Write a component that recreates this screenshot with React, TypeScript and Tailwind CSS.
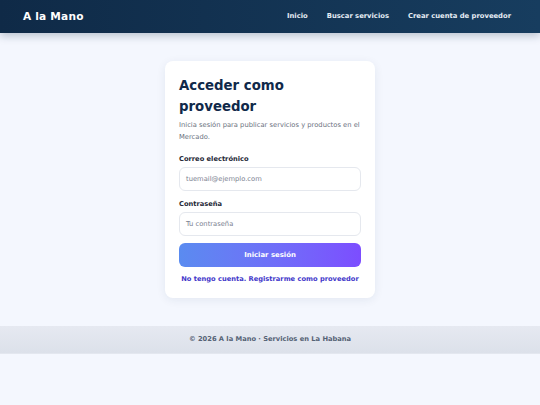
import React from 'react';

const font = { fontFamily: '"DejaVu Sans", Verdana, sans-serif' };

export default function App() {
  return (
    <div className="min-h-[405px] bg-[#f4f7fe] flex flex-col" style={font}>
      {/* Header */}
      <header className="h-[33px] flex items-center justify-between px-[23px] bg-gradient-to-r from-[#0f2a47] to-[#173d5f] shadow-[0_3px_8px_rgba(15,42,71,0.25)] relative z-10">
        <span className="text-white font-bold text-[10.6px] tracking-[0.2px]">A la Mano</span>
        <nav className="flex items-center gap-[19px] text-[6.8px] font-bold text-[#e6edf5] pr-[6px]">
          <a>Inicio</a>
          <a>Buscar servicios</a>
          <a>Crear cuenta de proveedor</a>
        </nav>
      </header>

      {/* Main */}
      <main className="flex justify-center py-[28px]">
        <div className="w-[210px] bg-white rounded-[8px] shadow-[0_2px_10px_rgba(30,50,90,0.08)] px-[14px] pt-[14px] pb-[13.5px]">
          <h1 className="text-[13.3px] leading-[21px] font-bold text-[#10294a]">
            Acceder como proveedor
          </h1>
          <p className="mt-[3px] text-[6.75px] leading-[11.5px] text-[#6b7280]">
            Inicia sesión para publicar servicios y productos en el Mercado.
          </p>

          <label className="block mt-[10.5px] text-[6.7px] leading-[11px] font-bold text-[#1f2937]">
            Correo electrónico
          </label>
          <div className="mt-[2.5px] h-[24px] rounded-[6px] border border-[#e5e8ee] flex items-center px-[6px] text-[6.75px] text-[#7b8190]">
            tuemail@ejemplo.com
          </div>

          <label className="block mt-[7.5px] text-[6.7px] leading-[11px] font-bold text-[#1f2937]">
            Contraseña
          </label>
          <div className="mt-[2.5px] h-[24px] rounded-[6px] border border-[#e5e8ee] flex items-center px-[6px] text-[6.75px] text-[#7b8190]">
            Tu contraseña
          </div>

          <button className="mt-[7px] w-full h-[24px] rounded-[6px] bg-gradient-to-r from-[#5a8bf0] to-[#7c4dff] text-white text-[6.9px] font-bold flex items-center justify-center">
            Iniciar sesión
          </button>

          <p className="mt-[6.5px] text-center text-[6.7px] leading-[11px] font-bold text-[#4338ca]">
            No tengo cuenta. Registrarme como proveedor
          </p>
        </div>
      </main>

      {/* Footer */}
      <footer className="h-[28px] flex items-center justify-center bg-gradient-to-b from-[#e6e9f1] to-[#dce1ea] border-b border-[#e3e7ef] text-[6.7px] font-bold text-[#556275]">
        © 2026 A la Mano · Servicios en La Habana
      </footer>
    </div>
  );
}
